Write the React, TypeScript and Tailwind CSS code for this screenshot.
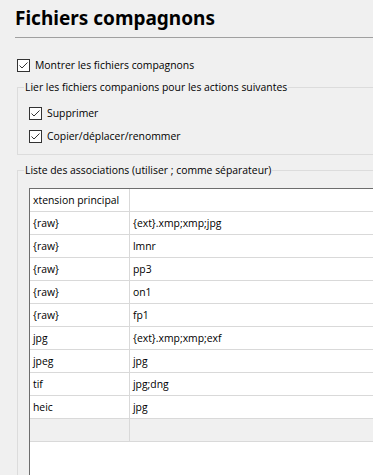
import React from "react";

function Check({ label, className }: { label: string; className?: string }) {
  return (
    <div className={"flex items-center h-[16px] " + (className ?? "")}>
      <div className="w-[13px] h-[13px] border border-[#333333] bg-white flex items-center justify-center shrink-0">
        <svg width="11" height="11" viewBox="0 0 11 11">
          <polyline points="1.5,5.5 4,8 9.5,2.5" fill="none" stroke="#333333" strokeWidth="1" />
        </svg>
      </div>
      <span className="ml-[5px] text-[10.4px] text-black leading-[16px]">{label}</span>
    </div>
  );
}

const rows: [string, string][] = [
  ["xtension principal", ""],
  ["{raw}", "{ext}.xmp;xmp;jpg"],
  ["{raw}", "lmnr"],
  ["{raw}", "pp3"],
  ["{raw}", "on1"],
  ["{raw}", "fp1"],
  ["jpg", "{ext}.xmp;xmp;exf"],
  ["jpeg", "jpg"],
  ["tif", "jpg;dng"],
  ["heic", "jpg"],
];

export default function App() {
  return (
    <div className="w-[373px] h-[475px] bg-[#f0f0f0] overflow-hidden text-black font-['Open_Sans',sans-serif]">
      <div className="pl-[15px] pt-[6px] h-[32px] text-[19px] font-bold leading-[24px] font-['Noto_Sans',sans-serif]">
        Fichiers compagnons
      </div>
      <div className="ml-[15px] mt-[5px] h-px bg-[#a0a0a0]" />
      <Check label="Montrer les fichiers compagnons" className="ml-[17px] mt-[19px]" />
      <fieldset className="ml-[17px] mt-[6px] w-[400px] border border-[#dcdcdc] pb-[10px]">
        <legend className="ml-[6px] px-[1px] text-[10.4px] leading-[16px]">
          Lier les fichiers companions pour les actions suivantes
        </legend>
        <Check label="Supprimer" className="ml-[11px] mt-[10px]" />
        <Check label="Copier/déplacer/renommer" className="ml-[11px] mt-[7px]" />
      </fieldset>
      <fieldset className="ml-[17px] mt-[7px] w-[400px] h-[400px] border border-[#dcdcdc]">
        <legend className="ml-[6px] px-[1px] text-[10.4px] leading-[16px]">
          Liste des associations (utiliser ; comme séparateur)
        </legend>
        <div className="ml-[11px] mt-[10px] border-l border-t border-[#6d6d6d] bg-white h-[400px] text-[10.4px]">
          {rows.map(([a, b], i) => (
            <div key={i} className="flex h-[23px] border-b border-[#d9d9d9]">
              <div className="w-[100px] border-r border-[#d9d9d9] pl-[3px] leading-[22px] whitespace-nowrap overflow-hidden">
                {a}
              </div>
              <div className="flex-1 pl-[3px] leading-[22px] whitespace-nowrap">{b}</div>
            </div>
          ))}
          <div className="flex h-[23px] border-b border-[#d9d9d9] bg-[#f0f0f0]">
            <div className="w-[100px] border-r border-[#d9d9d9]" />
            <div className="flex-1" />
          </div>
        </div>
      </fieldset>
    </div>
  );
}
